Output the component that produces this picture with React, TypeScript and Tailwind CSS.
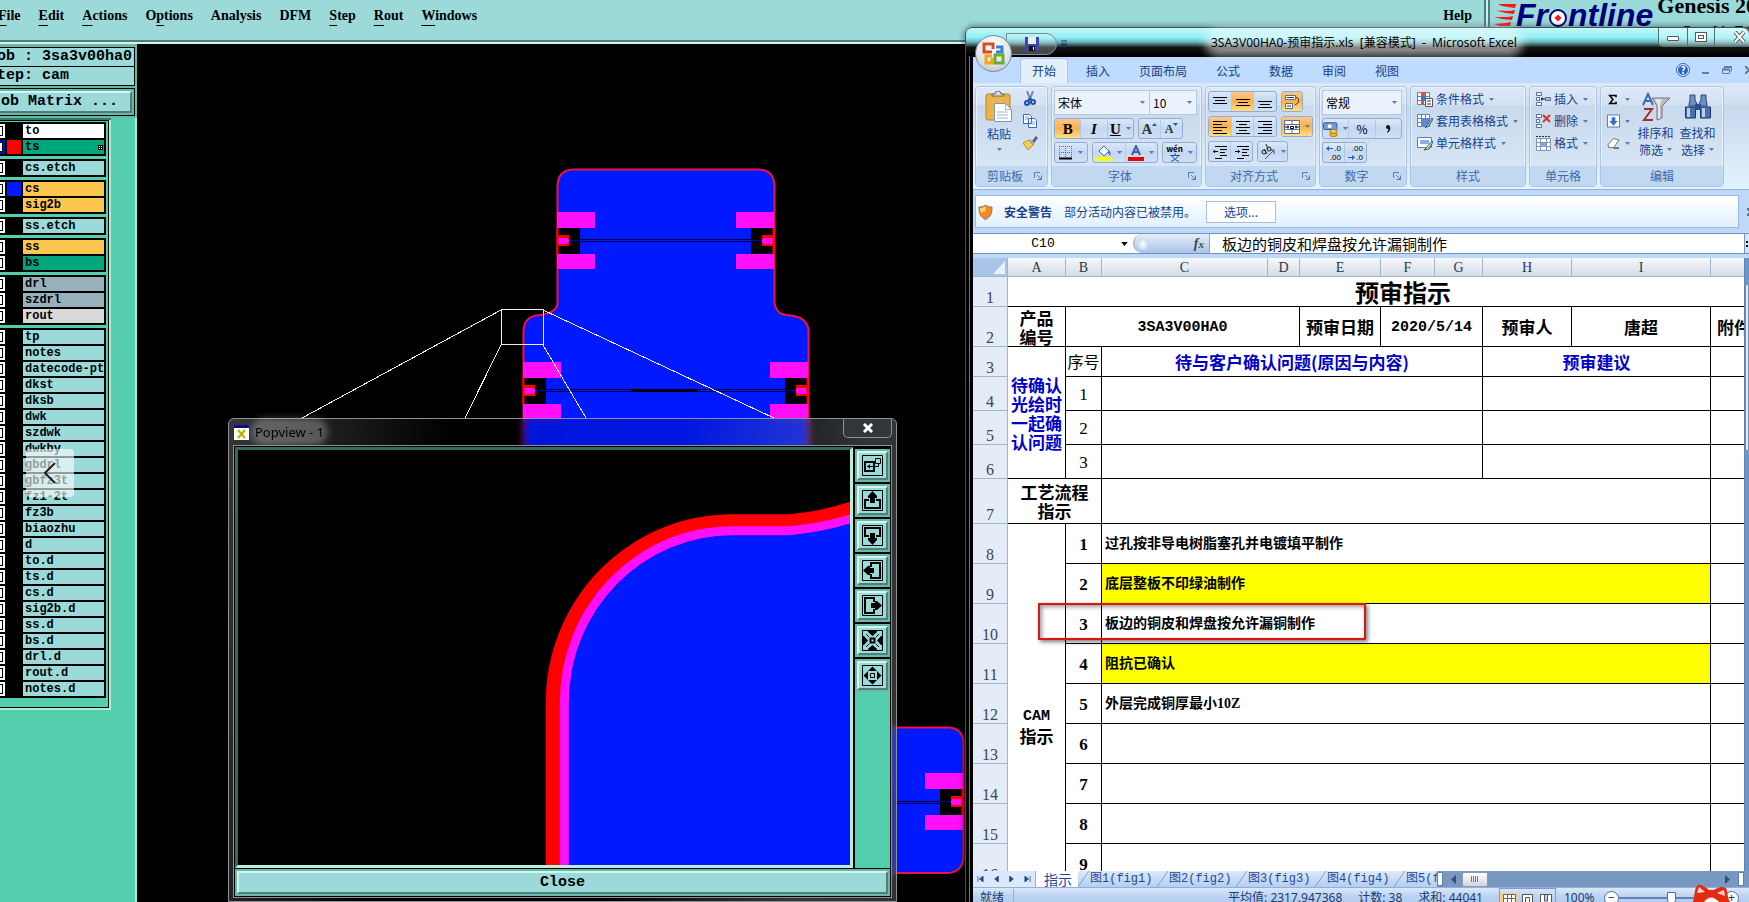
import type { ReactNode } from 'react';
import clsx from 'clsx';

type Layer = { name: string; tone: string; swatch?: string; active?: boolean };

const AQUA = 'bg-[#9cdada]';
const AMBER = 'bg-[#fdc64f]';
const GREEN = 'bg-[#00a67c]';
const STEEL = 'bg-[#98b2bd]';

const layerGroups: Layer[][] = [
  [{ name: 'to', tone: 'bg-white' }, { name: 'ts', tone: GREEN, swatch: 'bg-[#ff0000]', active: true }],
  [{ name: 'cs.etch', tone: AQUA }],
  [{ name: 'cs', tone: AMBER, swatch: 'bg-[#0019ff]' }, { name: 'sig2b', tone: AMBER }],
  [{ name: 'ss.etch', tone: AQUA }],
  [{ name: 'ss', tone: AMBER }, { name: 'bs', tone: GREEN }],
  [{ name: 'drl', tone: STEEL }, { name: 'szdrl', tone: STEEL }, { name: 'rout', tone: 'bg-[#d9d9d9]' }],
  ['tp', 'notes', 'datecode-pto', 'dkst', 'dksb', 'dwk', 'szdwk', 'dwkby', 'gbdrl', 'gbfz3t', 'fz1-2t', 'fz3b', 'biaozhu',
    'd', 'to.d', 'ts.d', 'cs.d', 'sig2b.d', 'ss.d', 'bs.d', 'drl.d', 'rout.d', 'notes.d'].map(name => ({ name, tone: AQUA })),
];

// [text before the mnemonic, mnemonic, rest]
const menus = [
  ['', 'F', 'ile'], ['', 'E', 'dit'], ['', 'A', 'ctions'], ['O', 'p', 'tions'], ['Analysis', '', ''],
  ['DFM', '', ''], ['', 'S', 'tep'], ['', 'R', 'out'], ['', 'W', 'indows'],
];

function MenuBar() {
  return (
    <header className="flex h-11 shrink-0 items-start overflow-hidden border-b-2 border-[#d8f2f0] bg-[#9cdada] font-['Liberation_Serif',serif] text-sm font-bold text-black shadow-[inset_0_-2px_0_#4f7f7c]">
      <nav className="-ml-[2px] flex gap-[18px] pt-[6px]">
        {menus.map(([a, b, c]) => (
          <button key={a + b + c} className="leading-[20px]">{a}<span className="underline underline-offset-[5px]">{b}</span>{c}</button>
        ))}
      </nav>
      <button className="ml-auto pt-[6px] leading-[20px]">Help</button>
      <div className="ml-3 h-full w-[6px] border-x-2 border-[#4f7f7c] bg-[#c9efee]" />
      <div className="flex w-[259px] items-start pl-1">
        <svg className="mt-1 h-[24px] w-[22px] shrink-0" viewBox="0 0 22 24">
          <g fill="#f01818">
            <path d="M4 0H22L21 4L8 2ZM2 6.500 16 7 21 6 20 10 12 9ZM0 13 14 13 19 12 18 16 8 15ZM0 20 12 19 17 18 16 22 6 22Z" />
          </g>
        </svg>
        <span className="flex items-center font-['Liberation_Sans',sans-serif] text-[32px] font-bold italic leading-[31px] text-[#00007c]">
          Fr
          <svg className="mt-1 h-[20px] w-[20px]" viewBox="0 0 20 20" aria-label="o">
            <circle cx="10" cy="10" r="8" fill="#fff" stroke="#00007c" strokeWidth="2" />
            <path d="M10 6.500L13.500 10L10 13.500L6.500 10Z" fill="#f01818" />
          </svg>
          ntline
        </span>
        <div className="ml-1 shrink-0 whitespace-nowrap">
          <div className="-mt-[6px] text-[22px] leading-[24px]">Genesis 2000</div>
          <div className="mt-[6px] pl-6 text-sm leading-[16px]">Graphic Editor</div>
        </div>
      </div>
    </header>
  );
}

function LayerRow({ layer }: { layer: Layer }) {
  return (
    <label className="flex h-[14px] items-center">
      <input type="checkbox" aria-label={layer.name} className={clsx('h-[14px] w-[14px] appearance-none border-2 bg-white outline outline-1 -outline-offset-[3px] outline-black', layer.active ? 'border-[#0010c0]' : 'border-white')} />
      <span className={clsx('ml-[2px] h-[14px] w-[14px]', layer.swatch ?? 'bg-black')} />
      <span className={clsx('ml-[2px] flex h-[14px] w-[81px] items-center overflow-hidden whitespace-nowrap pl-[2px] leading-[14px]', layer.tone)}>
        {layer.name}
        {layer.active && (
          <svg className="ml-auto mr-[1px] h-[5px] w-[5px]" viewBox="0 0 5 5"><path d="M0 0H5V5H0Z" fill="#000" /><path d="M1 1h1v1H1ZM3 1h1v1H3ZM1 3h1v1H1ZM3 3h1v1H3Z" fill="#fff" /></svg>
        )}
      </span>
    </label>
  );
}

function Sidebar() {
  return (
    <aside className="flex w-[137px] shrink-0 flex-col overflow-hidden bg-[#55ceae] font-['Liberation_Mono',monospace] font-bold text-black">
      <div className="bg-[#68b8a6] pb-[2px] pt-[3px] text-[15px]">
        <div className="mr-[2px] whitespace-pre border-y border-r border-black bg-[#9cdada] leading-[18px]"><span className="-ml-3">Job : 3sa3v00ha0</span></div>
        <div className="mr-[2px] whitespace-pre border-b border-r border-black bg-[#9cdada] leading-[18px]"><span className="-ml-3">Step: cam</span></div>
        <div className="mr-[2px] mt-[2px] border-y border-r border-black py-[2px] pr-[2px]">
          <button className="flex h-[22px] w-full items-center whitespace-pre border-b-2 border-r-2 border-t-2 border-b-[#4f7f7c] border-r-[#4f7f7c] border-t-[#d0f6f2] bg-[#9cdada]"><span className="-ml-2">Job Matrix ...</span></button>
        </div>
      </div>
      <div className="flex flex-1 border-r-2 border-[#a8ecd9]">
        <div className="flex w-[111px] flex-col border-t-2 border-[#2f7c68]">
          <div className="flex flex-col border-b-2 border-r-2 border-[#a8ecd9] text-[12px]">
            <div className="flex flex-col gap-[3px] border-b border-r border-t border-black pb-[9px] pt-[1px]">
              {layerGroups.map((group, i) => (
                <div key={i} className="-ml-[9px] flex w-[115px] flex-col gap-[2px] bg-black py-[2px]">
                  {group.map(layer => <LayerRow key={layer.name} layer={layer} />)}
                </div>
              ))}
            </div>
          </div>
        </div>
      </div>
    </aside>
  );
}

function Pads({ x, y, flip }: { x: number; y: number; flip?: boolean }) {
  return (
    <g transform={flip ? `translate(${x} ${y}) scale(-1 1)` : `translate(${x} ${y})`}>
      <rect x="1" y="16" width="22" height="26" fill="#000" />
      <rect width="38" height="16" fill="#ff10f8" />
      <rect y="42" width="38" height="15" fill="#ff10f8" />
      <rect width="12" height="11" y="23" fill="#f00" />
      <path d="M0 26H10L12 28V30L10 32H0Z" fill="#ff10f8" />
      <path d="M.5 16V42" stroke="#f00" strokeWidth="2" />
      <path d="M12 28.500H23" stroke="#0000a8" />
    </g>
  );
}

function BoardCanvas() {
  return (
    <svg className="h-full min-w-0 flex-1 bg-black" viewBox="137 44 1612 858" preserveAspectRatio="xMinYMin slice">
      <path d="M523.500 620V331Q524 316 540 315Q557 313 557.500 303V186Q558 170 573 169.500H759Q774 170 774.500 186V303Q776 314 786 315Q808 316 808.500 331V620Z" fill="#0019ff" stroke="#f0104a" strokeWidth="2" />
      <path d="M580 239.500H751M580 241.500H751M546 389.500H785M546 391.500H785" stroke="#000040" />
      <path d="M631 390.500H698" stroke="#000" strokeWidth="3" />
      <Pads x={557} y={212} />
      <Pads x={774} y={212} flip />
      <Pads x={523} y={362} />
      <Pads x={808} y={362} flip />
      <path d="M700 727.500H948Q963 728 963.500 743V858Q962 872 948 873H700Z" fill="#0019ff" stroke="#f0104a" strokeWidth="2" />
      <path d="M890 801.500H941M890 803.500H941" stroke="#000040" />
      <Pads x={963} y={773} flip />
      <path d="M501.500 309.500H543.500V344.500H501.500ZM501 310L302 418M501 345L465 418M543 345L586 418M543 310L774 418" fill="none" stroke="#eeeedd" shapeRendering="crispEdges" />
    </svg>
  );
}

const popTools: { label: string; icon: ReactNode }[] = [
  { label: 'Zoom to view', icon: <><path d="M3 7h9v9H3Z" fill="none" stroke="#000" strokeWidth="2" /><path d="M13.500 3.500h5v5h-5ZM12 11.500h4.500v-3M5 11.500h6M7.500 9.500v4M6.500 10.500v2" fill="none" stroke="#000" /></> },
  { label: 'Pan up', icon: <><path d="M7 10H3v8h15V10H14" fill="none" stroke="#000" strokeWidth="2" /><path d="M10.500 1L15 6V8H13V13H8V8H6V6Z" /></> },
  { label: 'Pan down', icon: <><path d="M7 11H3V3h15V11H14" fill="none" stroke="#000" strokeWidth="2" /><path d="M10.500 20L15 15V13H13V8H8V13H6V15Z" /></> },
  { label: 'Pan left', icon: <><path d="M9 7V3h9v15H9V14" fill="none" stroke="#000" strokeWidth="2" /><path d="M1 10.500L6 6H8V8H12V13H8V15H6Z" /></> },
  { label: 'Pan right', icon: <><path d="M12 7V3H3v15H12V14" fill="none" stroke="#000" strokeWidth="2" /><path d="M20 10.500L15 6H13V8H9V13H13V15H15Z" /></> },
  { label: 'Zoom in', icon: <><path d="M8.500 8.500h4v4h-4Z" fill="none" stroke="#000" strokeWidth="2" /><path d="M6 1h9v1L10.500 6L6 2ZM6 20h9v-1L10.500 15L6 19ZM1 6v9h1L6 10.500L2 6ZM20 6v9h-1L15 10.500L19 6Z" /><path d="M4 4l3 3M17 4l-3 3M4 17l3-3M17 17l-3-3" stroke="#000" /></> },
  { label: 'Zoom out', icon: <><path d="M8.500 8.500h4v4h-4Z" fill="none" stroke="#000" /><path d="M6 6h9L10.500 1.500ZM6 15h9L10.500 19.500ZM6 6v9L1.500 10.500ZM15 6v9L19.500 10.500Z" /></> },
];

function Popview() {
  return (
    <section className="absolute bottom-0 left-[228px] top-[418px] flex w-[669px] flex-col rounded-t-[6px] border border-[#8d9195] bg-[linear-gradient(100deg,rgba(90,92,95,.6),rgba(0,0,0,.15)_30%,rgba(0,0,0,.12)_60%,rgba(120,130,140,.4)_85%,rgba(80,82,85,.6))] px-1 pb-[3px] backdrop-blur-[3px]">
      <div className="flex h-[26px] shrink-0 items-start">
        <svg className="ml-[1px] mt-[6px] h-[15px] w-[15px]" viewBox="0 0 15 15">
          <path d="M0 0h15v15H0Z" fill="#fff" /><path d="M0 0h15v3H0Z" fill="#10107c" />
          <path d="M4 5l7 8M11 5l-7 8" stroke="#b8b000" strokeWidth="2" />
        </svg>
        <h2 className="ml-[6px] mt-[3px] rounded-full bg-white/25 font-['Noto_Sans',sans-serif] text-[13px] leading-[20px] text-black shadow-[0_0_6px_4px_rgba(255,255,255,.25)]">Popview - 1</h2>
        <button aria-label="Close window" className="ml-auto flex h-[19px] w-[49px] items-center justify-center rounded-b-[5px] border border-t-0 border-[#8d9195] bg-[#33363a]">
          <svg className="h-[10px] w-[12px]" viewBox="0 0 12 10"><path d="M2 1l8 8M10 1l-8 8" stroke="#fff" strokeWidth="3" /></svg>
        </button>
      </div>
      <div className="flex min-h-0 flex-1 flex-col border border-[#8d9195] bg-black p-[1px]">
        <div className="flex min-h-0 flex-1">
          <div className="min-w-0 flex-1 border-[3px] border-b-[#b8efdc] border-l-[#356b5c] border-r-[#b8efdc] border-t-[#356b5c]">
            <svg className="h-full w-full" viewBox="238 450 612 414" preserveAspectRatio="xMinYMin slice">
              <path d="M545 870V702A186 188 0 0 1 731 514H788Q822 511 853 500V870Z" fill="#f00" />
              <path d="M559 870V702A172 176 0 0 1 731 526H788Q822 523 853 513V870Z" fill="#ff10f8" />
              <path d="M568 870V702A163 167 0 0 1 731 535H788Q822 532 853 522V870Z" fill="#0019ff" />
            </svg>
          </div>
          <div className="ml-[2px] flex w-[35px] flex-col bg-[#55ceae]">
            {popTools.map(tool => (
              <div key={tool.label} className="border-t-2 border-black bg-[#68b8a6] p-[2px]">
                <button aria-label={tool.label} className="flex h-[29px] w-full items-center justify-center border-2 border-b-[#4f7f7c] border-l-[#d0f6f2] border-r-[#4f7f7c] border-t-[#d0f6f2] bg-[#9cdada]">
                  <svg className="h-[21px] w-[21px]" viewBox="0 0 21 21"><path d="M.5.5h20v20H.5Z" fill="none" stroke="#000" />{tool.icon}</svg>
                </button>
              </div>
            ))}
          </div>
        </div>
        <div className="mt-[1px] bg-[#68b8a6] p-[2px]">
          <button className="flex h-[23px] w-full items-center justify-center border-2 border-b-[#4f7f7c] border-l-[#d0f6f2] border-r-[#4f7f7c] border-t-[#d0f6f2] bg-[#9cdada] font-['Liberation_Mono',monospace] text-[15px] font-bold leading-[18px] text-black">Close</button>
        </div>
      </div>
    </section>
  );
}

function Caret() {
  return <svg className="h-[3px] w-[5px] shrink-0" viewBox="0 0 5 3"><path d="M0 0H5L2.500 3Z" fill="#5a7cb0" /></svg>;
}

function Cluster({ children, className }: { children: ReactNode; className?: string }) {
  return <div className={clsx('flex h-[21px] divide-x divide-[#b4cbe8] overflow-hidden rounded-[3px] border border-[#92add2] bg-[linear-gradient(#dbe8f8,#c3d8f2_50%,#cfe0f5)]', className)}>{children}</div>;
}

function Tool({ label, children, on, caret }: { label: string; children: ReactNode; on?: boolean; caret?: boolean }) {
  return (
    <button aria-label={label} className={clsx('flex min-w-0 flex-1 items-center justify-center gap-[5px]', on && 'bg-[linear-gradient(#fbc98a,#fdb04c_50%,#ffe08a)]')}>
      {children}
      {caret && <Caret />}
    </button>
  );
}

function Lines({ d }: { d: string }) {
  return <svg className="h-4 w-4" viewBox="0 0 16 16"><path d={d} stroke="#000" shapeRendering="crispEdges" /></svg>;
}

function Combo({ value, label, className }: { value: string; label: string; className: string }) {
  return (
    <div className={clsx('relative flex h-[25px] items-center border border-[#b3c9e6] bg-[#eaf2fb]', className)}>
      <select aria-label={label} className="h-full w-full appearance-none bg-transparent pl-[3px] text-[12px] leading-[20px] text-black outline-none"><option>{value}</option></select>
      <span className="pointer-events-none absolute right-1 top-[10px]"><Caret /></span>
    </div>
  );
}

function RibbonGroup({ title, className, launcher, children }: { title: string; className: string; launcher?: boolean; children: ReactNode }) {
  return (
    <div className={clsx('flex h-[101px] shrink-0 flex-col overflow-hidden rounded-[4px] border border-[#a9c4e4] bg-[linear-gradient(#dde9f7,#d3e1f3_18%,#c8d9ed_19%,#dceaf8)] shadow-[inset_0_0_0_1px_rgba(255,255,255,.5)]', className)}>
      <div className="min-h-0 flex-1">{children}</div>
      <div className="flex h-5 items-center justify-center bg-[#c1d8f0] text-[12px] leading-[20px] text-[#3e6aaa]">
        <span className="flex-1 text-center">{title}</span>
        {launcher && <svg className="mr-[5px] h-[8px] w-[8px]" viewBox="0 0 8 8"><path d="M.5 6V.5H6M3 3l4 4M7.500 3.500v4h-4" fill="none" stroke="#5b7bab" /></svg>}
      </div>
    </div>
  );
}

function IconRow({ text, icon }: { text: string; icon: ReactNode }) {
  return <button className="flex h-[22px] items-center gap-[3px] text-[12px] text-[#15428b]"><svg className="h-4 w-4" viewBox="0 0 16 16">{icon}</svg>{text}<span className="ml-[2px]"><Caret /></span></button>;
}

const gridIcon = <><path d="M.5 1.500h12v12H.5ZM.5 5.500h12M.5 9.500h12M4.500 1.500v12M8.500 1.500v12" fill="#fff" stroke="#5f7fb5" /></>;
const cellRows = <path d="M1.500 1.500h5v3h-5ZM1.500 6.500h3v3h-3ZM1.500 11.500h5v3h-5Z" fill="#fff" stroke="#54709c" />;

function Ribbon() {
  return (
    <div className="flex h-[107px] shrink-0 gap-[3px] overflow-hidden border-b border-[#8db2e3] bg-[linear-gradient(#dde9f7,#d0dff2_20%,#c7d8ed_21%,#e3f4ff)] px-[2px] pt-[3px]">
      <RibbonGroup title="剪贴板" className="w-[73px]" launcher>
        <div className="flex px-[9px] pt-1">
          <button className="flex w-[30px] flex-col items-center text-[12px] leading-[20px] text-[#15428b]">
            <svg className="h-[32px] w-[28px]" viewBox="0 0 28 32">
              <rect x="1" y="3" width="24" height="26" rx="2" fill="#e9b44c" stroke="#b9832a" />
              <path d="M7 5h12V3H16a3 3 0 0 0-6 0H7Z" fill="#ddd" stroke="#666" />
              <path d="M9.500 12.500h11l6 6v12h-17Z" fill="#fff" stroke="#8296b8" /><path d="M20.500 12.500v6h6M12 21h11M12 24h11M12 27h11" fill="none" stroke="#9fb2cf" />
            </svg>
            <span className="mt-[1px] whitespace-nowrap">粘贴</span>
            <span className="mt-1"><Caret /></span>
          </button>
          <div className="ml-[9px] flex flex-col gap-[6px]">
            <button aria-label="剪切"><svg className="block h-4 w-4" viewBox="0 0 16 16"><path d="M5 0l3 8M11 0L8 8" stroke="#6d86ab" strokeWidth="2" /><path d="M8 7l-2 3M8 7l2 3" stroke="#1f4fa8" strokeWidth="2" /><circle cx="5" cy="12" r="2" fill="none" stroke="#1f4fa8" strokeWidth="2" /><circle cx="11" cy="11" r="2" fill="none" stroke="#1f4fa8" strokeWidth="2" /></svg></button>
            <button aria-label="复制"><svg className="block h-4 w-4" viewBox="0 0 16 16"><path d="M1.500 1.500h6l2 2v7h-8ZM6.500 5.500h6l2 2v7h-8Z" fill="#fff" stroke="#3b69b4" /><path d="M3 4h4M3 6h3M8 9h5M8 11h5" stroke="#7da0d8" /></svg></button>
            <button aria-label="格式刷"><svg className="block h-4 w-4" viewBox="0 0 16 16"><path d="M10 6l4-5 2 2-4 5Z" fill="#555a88" /><path d="M8 4l5 5-2 1-4-5Z" fill="#aaa" /><path d="M1 8l6-3 4 5-5 5Z" fill="#f4cf5c" stroke="#b88f24" /></svg></button>
          </div>
        </div>
      </RibbonGroup>

      <RibbonGroup title="字体" className="w-[151px]" launcher>
        <div className="flex flex-col gap-[3px] px-[2px] pt-[3px]">
          <div className="flex"><Combo value="宋体" label="字体名称" className="w-[96px]" /><Combo value="10" label="字号" className="w-[47px] border-l-0" /></div>
          <div className="flex gap-1 font-['Liberation_Serif',serif] text-[15px] font-bold leading-[18px] text-black">
            <Cluster className="w-[80px]"><Tool label="加粗" on>B</Tool><Tool label="倾斜"><i>I</i></Tool><Tool label="下划线" caret><u>U</u></Tool></Cluster>
            <Cluster className="w-[45px] text-[#333]">
              <Tool label="增大字号"><span className="flex">A<svg className="mt-[3px] h-[3px] w-[5px]" viewBox="0 0 5 3"><path d="M0 3H5L2.500 0Z" fill="#2d57a0" /></svg></span></Tool>
              <Tool label="减小字号"><span className="flex text-[12px]">A<svg className="mt-[3px] h-[3px] w-[5px]" viewBox="0 0 5 3"><path d="M0 0H5L2.500 3Z" fill="#2d57a0" /></svg></span></Tool>
            </Cluster>
          </div>
          <div className="flex gap-1">
            <Cluster className="w-[34px]"><Tool label="边框" caret><svg className="h-[14px] w-[14px]" viewBox="0 0 14 14"><path d="M.5 0v13M6.500 0v13M12.500 0v13M0 .5h13M0 6.500h13" stroke="#667" strokeDasharray="1 1" /><path d="M0 12.500h13" stroke="#000" strokeWidth="2" /></svg></Tool></Cluster>
            <Cluster className="w-[66px]">
              <Tool label="填充颜色" caret><svg className="h-4 w-4" viewBox="0 0 16 16"><path d="M3 6l5-5 5 5-5 5Z" fill="#fff" stroke="#445d88" /><path d="M12 5c3 1 3 4 2 6l-2-3Z" fill="#4e7cc0" /><path d="M0 12h16v4H0Z" fill="#ff0" /></svg></Tool>
              <Tool label="字体颜色" caret><svg className="h-4 w-4" viewBox="0 0 16 16"><path d="M4 10L8 1l4 9M5.500 7h5" fill="none" stroke="#3a5ea8" strokeWidth="2" /><path d="M0 12h16v4H0Z" fill="#f00000" /></svg></Tool>
            </Cluster>
            <Cluster className="w-[35px]">
              <Tool label="拼音指南" caret>
                <span className="flex flex-col items-center font-bold text-black">
                  <span className="text-[8px] leading-[9px]">wén</span>
                  <svg className="h-[9px] w-[12px]" viewBox="0 0 12 9"><path d="M6 0v2M1 2.500h10M3 3q2 4 7 5.500M9 3q-2 4-7 5.500" fill="none" stroke="#1f4fa8" /></svg>
                </span>
              </Tool>
            </Cluster>
          </div>
        </div>
      </RibbonGroup>

      <RibbonGroup title="对齐方式" className="w-[111px]" launcher>
        <div className="flex flex-col gap-[4px] px-[2px] pt-1">
          <div className="flex gap-1">
            <Cluster className="w-[69px]">
              <Tool label="顶端对齐"><Lines d="M1 3.500h14M3 6.500h10M1 9.500h14" /></Tool>
              <Tool label="垂直居中" on><Lines d="M1 5.500h14M3 8.500h10M1 11.500h14" /></Tool>
              <Tool label="底端对齐"><Lines d="M1 7.500h14M3 10.500h10M1 13.500h14" /></Tool>
            </Cluster>
            <Cluster className="w-[22px]"><Tool label="自动换行" on><svg className="h-4 w-4" viewBox="0 0 16 16"><path d="M1.500 1.500h10v4h-10ZM1.500 9.500h7v5h-7Z" fill="#fff" stroke="#54709c" /><path d="M3 3.500h7M3 12h4M12 3.500c4 0 3 7-1 7" fill="none" stroke="#333" /></svg></Tool></Cluster>
          </div>
          <div className="flex gap-1">
            <Cluster className="w-[69px]">
              <Tool label="左对齐" on><Lines d="M1 2.500h14M1 5.500h9M1 8.500h14M1 11.500h9M1 14.500h14" /></Tool>
              <Tool label="居中"><Lines d="M1 2.500h14M4 5.500h8M1 8.500h14M4 11.500h8M1 14.500h14" /></Tool>
              <Tool label="右对齐"><Lines d="M1 2.500h14M6 5.500h9M1 8.500h14M6 11.500h9M1 14.500h14" /></Tool>
            </Cluster>
            <Cluster className="w-[32px]"><Tool label="合并后居中" on caret><svg className="h-4 w-4" viewBox="0 0 16 16"><path d="M.5 1.500h15v13H.5ZM.5 5.500h15M.5 10.500h15M8 1v4M8 11v4" fill="#fff" stroke="#54709c" /><path d="M1 8h4M11 8h4M4 6.500v3M12 6.500v3M6.500 7.500h3v2h-3Z" fill="none" stroke="#000" /></svg></Tool></Cluster>
          </div>
          <div className="flex gap-1">
            <Cluster className="w-[45px]">
              <Tool label="减少缩进量"><Lines d="M3 2.500h12M8 5.500h7M8 8.500h5M8 11.500h7M3 14.500h7M1 7.500h5M2 6.500h1M2 8.500h1" /></Tool>
              <Tool label="增加缩进量"><Lines d="M3 2.500h12M8 5.500h7M8 8.500h5M8 11.500h7M3 14.500h7M1 7.500h5M4 6.500h1M4 8.500h1" /></Tool>
            </Cluster>
            <Cluster className="w-[31px]"><Tool label="方向" caret><svg className="h-4 w-4" viewBox="0 0 16 16"><path d="M5 15L14 6M14 6v4M14 6h-4" stroke="#555" fill="none" /><circle cx="4" cy="8" r="2" fill="none" stroke="#222" /><circle cx="9" cy="5" r="2" fill="none" stroke="#222" /><path d="M4 5l3 5M6 0l2 5" stroke="#222" /></svg></Tool></Cluster>
          </div>
        </div>
      </RibbonGroup>

      <RibbonGroup title="数字" className="w-[88px]" launcher>
        <div className="flex flex-col gap-[3px] px-[2px] pt-[3px]">
          <Combo value="常规" label="数字格式" className="w-[80px]" />
          <Cluster className="w-[80px] text-[12px] text-black">
            <Tool label="会计数字格式" caret><svg className="h-4 w-4" viewBox="0 0 16 16"><rect x=".5" y="1.500" width="14" height="7" rx="1" fill="#7a9bd0" stroke="#2d57a0" /><circle cx="7" cy="5" r="2" fill="#fff" /><ellipse cx="11" cy="14" rx="4" ry="2" fill="#e8b830" stroke="#a87b10" /><ellipse cx="11" cy="10.500" rx="4" ry="2" fill="#f5cf58" stroke="#a87b10" /></svg></Tool>
            <Tool label="百分比样式">%</Tool>
            <Tool label="千位分隔样式"><svg className="h-[8px] w-[5px]" viewBox="0 0 5 8"><path d="M0 2a2 2 0 1 1 4 0c1 3-1 5-3 6l0-1c1-1 2-2 1-3a2 2 0 0 1-2-2Z" fill="#111" /></svg></Tool>
          </Cluster>
          <Cluster className="w-[45px] font-['Liberation_Sans',sans-serif] text-[8px] leading-[9px] text-black">
            <Tool label="增加小数位数"><span className="flex flex-col items-end"><span className="flex items-center gap-[1px]"><svg className="h-[5px] w-[7px]" viewBox="0 0 7 5"><path d="M0 2.500L3 0V2H7V3H3V5Z" fill="#1f5fc8" /></svg>.0</span><span>.00</span></span></Tool>
            <Tool label="减少小数位数"><span className="flex flex-col items-end"><span>.00</span><span className="flex items-center gap-[1px]"><svg className="h-[5px] w-[7px]" viewBox="0 0 7 5"><path d="M7 2.500L4 0V2H0V3H4V5Z" fill="#1f5fc8" /></svg>.0</span></span></Tool>
          </Cluster>
        </div>
      </RibbonGroup>

      <RibbonGroup title="样式" className="w-[116px]">
        <div className="flex flex-col pl-[6px] pt-[1px]">
          <IconRow text="条件格式" icon={<>{gridIcon}<path d="M4 1h4v4H4ZM4 9h3v4H4Z" fill="#e0523c" /><path d="M4 5h5v4H4Z" fill="#4a74c4" /><path d="M8.500 7.500h7v8h-7Z" fill="#fff" stroke="#556" /><path d="M10 10h4M10 13h4" stroke="#333" /></>} />
          <IconRow text="套用表格格式" icon={<>{gridIcon}<path d="M4 5h9v9H4Z" fill="#5d8ad4" /><path d="M8 15l3-4 4-6 1 1-4 7Z" fill="#f0d078" stroke="#3058a0" /></>} />
          <IconRow text="单元格样式" icon={<><path d="M.5 2.500h14v10H.5Z" fill="#fff" stroke="#5f7fb5" /><path d="M3 5h9v4H3Z" fill="#85b0ea" /><path d="M7 15l3-3 5-6 1 1-4 7Z" fill="#f0d078" stroke="#3058a0" /></>} />
        </div>
      </RibbonGroup>

      <RibbonGroup title="单元格" className="w-[68px]">
        <div className="flex flex-col pl-[5px] pt-[1px]">
          <IconRow text="插入" icon={<>{cellRows}<path d="M6 8h4M7 6.500v3" stroke="#000" /><path d="M10.500 6.500h5v3h-5Z" fill="#9fc0ee" stroke="#54709c" /></>} />
          <IconRow text="删除" icon={<>{cellRows}<path d="M8 2l7 7M15 2L8 9" stroke="#e03020" strokeWidth="2" /></>} />
          <IconRow text="格式" icon={<><path d="M1.500 3.500h14v12h-14ZM1.500 7.500h14M1.500 11.500h14M5.500 3.500v12M11.500 3.500v12" fill="#fff" stroke="#7f94b8" /><path d="M6 8h5v4H6Z" fill="#7fa8e8" /><path d="M1 1.500h15" stroke="#333" strokeDasharray="2 1" /></>} />
        </div>
      </RibbonGroup>

      <RibbonGroup title="编辑" className="w-[124px]">
        <div className="flex pl-[6px] pt-[1px] text-[12px] leading-[17px] text-[#15428b]">
          <div className="flex w-6 flex-col">
            <button aria-label="求和" className="flex h-[22px] items-center gap-[7px]"><svg className="h-[11px] w-[11px]" viewBox="0 0 13 14"><path d="M11 4V2H3l4 5-4 5h8v-2" fill="none" stroke="#000" strokeWidth="2" /></svg><Caret /></button>
            <button aria-label="填充" className="flex h-[22px] items-center gap-[5px]"><svg className="h-[14px] w-[13px]" viewBox="0 0 14 14"><path d="M.5.5h13v13H.5Z" fill="#fff" stroke="#4870b0" /><path d="M5 3h4v4h2.500L7 12 2.500 7H5Z" fill="#2e6fd8" /></svg><Caret /></button>
            <button aria-label="清除" className="flex h-[22px] items-center gap-[5px]"><svg className="h-[14px] w-[13px]" viewBox="0 0 14 14"><path d="M1 9l6-7 6 2-6 8H2Z" fill="#fff" stroke="#666" /><path d="M7 12.500h6" stroke="#000" /></svg><Caret /></button>
          </div>
          <button className="ml-[6px] flex w-[37px] flex-col items-center whitespace-nowrap pt-1">
            <svg className="h-[32px] w-[32px]" viewBox="0 0 32 32">
              <path d="M3 13L8 2l5 11M5 9h6" fill="none" stroke="#3a68b8" strokeWidth="2" /><path d="M4 17h8L4 28h9" fill="none" stroke="#a03030" strokeWidth="2" />
              <path d="M12 6h18l-8 8v12l-5 2V14Z" fill="#b9bcc0" stroke="#77797d" /><path d="M15 7h7l-2 7v12l-2 1V14Z" fill="#e4e6e8" />
            </svg>
            <span>排序和</span><span className="flex items-center gap-1">筛选 <Caret /></span>
          </button>
          <button className="ml-[5px] flex w-[37px] flex-col items-center whitespace-nowrap pt-1">
            <svg className="h-[32px] w-[32px]" viewBox="0 0 32 32">
              <path d="M8 3h5v5l2 4v2h-8v-2l1-4ZM19 3h5v5l1 4v2h-8v-2l2-4Z" fill="#6f8fc4" stroke="#2d4878" /><path d="M3.500 15h10v11h-10ZM18.500 15h10v11h-10Z" fill="#4d6fa8" stroke="#1d3868" />
              <path d="M13 12h6v6h-6Z" fill="#2e4f88" /><path d="M5 16h3v9H5ZM20 16h3v9h-3Z" fill="#b9cdee" />
            </svg>
            <span>查找和</span><span className="flex items-center gap-1">选择 <Caret /></span>
          </button>
        </div>
      </RibbonGroup>
    </div>
  );
}

function TitleBar() {
  return (
    <div className="relative flex h-[28px] shrink-0 items-start rounded-t-[6px] bg-[linear-gradient(#c2f8fc,#8eeef4_35%,#69b4ba_50%,#111_70%,#000)]">
      <div className="ml-[40px] mt-[5px] flex h-[22px] w-[51px] items-center justify-center rounded-r-full border border-[#7f8f94] bg-white/25">
        <button aria-label="保存"><svg className="block h-[14px] w-[14px]" viewBox="0 0 14 14"><path d="M0 0h14v14H1L0 13Z" fill="#3b46a8" /><path d="M3 0h8v7H3Z" fill="#e8eefc" /><path d="M4 9h6v5H4Z" fill="#111" /><path d="M8 10h1v3H8Z" fill="#fff" /></svg></button>
      </div>
      <button aria-label="自定义快速访问工具栏" className="ml-1 mt-[12px]"><svg className="h-[8px] w-[6px]" viewBox="0 0 6 8"><path d="M0 1h6M0 4h6L3 7Z" stroke="#1b3a66" fill="#1b3a66" /></svg></button>
      <h1 className="flex-1 pl-[144px] pt-[6px] font-['Noto_Sans','Noto_Sans_CJK_SC',sans-serif] text-[12px] leading-[18px] text-black">
        <span className="whitespace-pre rounded-full bg-white/50 shadow-[0_0_8px_6px_rgba(255,255,255,.5)]">3SA3V00HA0-预审指示.xls  [兼容模式]  -  Microsoft Excel</span>
      </h1>
      <div className="flex h-[19px] w-[91px] shrink-0 overflow-hidden rounded-bl-[5px] border-b border-l border-[#4c7276] bg-white/30">
        <button aria-label="最小化" className="flex w-[29px] shrink-0 items-end justify-center border-r border-[#4c7276] pb-[5px]"><span className="h-[5px] w-[12px] rounded-[1px] border border-[#555] bg-white" /></button>
        <button aria-label="还原" className="flex w-[27px] shrink-0 items-center justify-center border-r border-[#4c7276]"><span className="flex h-[10px] w-[12px] items-center justify-center border border-[#555] bg-white"><span className="h-[4px] w-[6px] border border-[#555]" /></span></button>
        <button aria-label="关闭" className="flex w-[48px] shrink-0 items-center justify-center"><svg className="h-[12px] w-[13px]" viewBox="0 0 13 12"><path d="M2 1l9 10M11 1L2 11" stroke="#555" strokeWidth="4" /><path d="M2 1l9 10M11 1L2 11" stroke="#fff" strokeWidth="2" /></svg></button>
      </div>
      <button aria-label="Office 按钮" className="absolute left-[9px] top-[7px] z-10 flex h-[37px] w-[37px] items-center justify-center rounded-full border border-[#7d8894] bg-[radial-gradient(circle_at_50%_30%,#fff,#dfe3ea_60%,#a9b3c2)]">
        <svg className="h-[23px] w-[23px]" viewBox="0 0 23 23">
          <g fill="none" strokeWidth="3"><path d="M10 10H2V2h9v5" stroke="#dc4a1c" /><path d="M14 10h6V5h-6" stroke="#3b7fd0" /><path d="M10 14H4v7h6v-5" stroke="#f0a818" /><path d="M13 13h8v8h-8Z" stroke="#6aac34" /></g>
        </svg>
      </button>
    </div>
  );
}

const ribbonTabs = ['开始', '插入', '页面布局', '公式', '数据', '审阅', '视图'];

function RibbonTabs() {
  return (
    <div className="flex h-[27px] shrink-0 items-end overflow-hidden border-t border-black bg-[#bfdbff] pl-[47px] text-[12px] text-[#15428b]">
      {ribbonTabs.map((tab, i) => (
        <button key={tab} className={clsx('mr-[7px] h-[25px] shrink-0 rounded-t-[3px] px-[11px] leading-[22px]', i === 0 && 'border border-b-0 border-[#a8c6ec] bg-[#e4effb]')}>{tab}</button>
      ))}
      <div className="ml-auto flex h-full shrink-0 items-center gap-[13px]">
        <button aria-label="帮助" className="flex h-[12px] w-[12px] items-center justify-center rounded-full border border-white bg-[#2864c8] text-[10px] font-bold leading-[12px] text-white outline outline-1 outline-[#2864c8]">?</button>
        <button aria-label="最小化窗口" className="mt-[6px] h-[2px] w-[7px] bg-[#667c9c]" />
        <button aria-label="还原窗口"><svg className="block h-[9px] w-[10px]" viewBox="0 0 10 9"><path d="M2.500 3V1h7v4H8M.5 3.500h7v4h-7Z" fill="none" stroke="#667c9c" /><path d="M0 3.500h8M2 1h8" stroke="#667c9c" strokeWidth="2" /></svg></button>
        <button aria-label="关闭窗口" className="-mr-1"><svg className="block h-[8px] w-[8px]" viewBox="0 0 8 8"><path d="M0 0l8 8M8 0L0 8" stroke="#667c9c" strokeWidth="2" /></svg></button>
      </div>
    </div>
  );
}

function MessageBar() {
  return (
    <div className="flex shrink-0 items-center bg-[#c0d8f8] pb-[5px] pl-[2px] pt-[5px] text-[12px] text-[#15428b]">
      <div className="flex h-[33px] flex-1 items-center border border-[#9bbbe3] bg-[linear-gradient(#fff,#e0f1ff)]">
        <svg className="ml-[2px] h-[16px] w-[15px]" viewBox="0 0 15 16"><path d="M7.500 1C5 3 3 3 1 3c0 6 1 10 6.500 12.500C13 13 14 9 14 3c-2 0-4 0-6.500-2Z" fill="#f28a1c" stroke="#7a7a80" /><path d="M7.500 2C6 3.500 4 4 2 4c0 4 1 5 1 5l4.500-2Z" fill="#ffd070" /></svg>
        <b className="ml-[11px]">安全警告</b>
        <span className="ml-[12px]">部分活动内容已被禁用。</span>
        <button className="ml-[10px] h-[22px] w-[70px] border border-[#a3bfe4] bg-white leading-[18px]">选项...</button>
      </div>
      <button aria-label="关闭此消息" className="-mr-[3px] ml-2"><svg className="h-[8px] w-[5px]" viewBox="0 0 5 8"><path d="M0 0l4 4L0 8" fill="none" stroke="#55677f" strokeWidth="2" /></svg></button>
    </div>
  );
}

function FormulaBar() {
  return (
    <div className="flex h-[21px] shrink-0 items-stretch border-y border-[#6f94c4] bg-white text-black">
      <input aria-label="名称框" defaultValue="C10" className="w-[140px] bg-transparent text-center font-['Liberation_Mono',monospace] text-[13px] outline-none" />
      <button aria-label="名称列表" className="w-[20px] pl-[2px]"><svg className="mx-auto h-[4px] w-[7px]" viewBox="0 0 8 5"><path d="M0 0h8L4 5Z" fill="#000" /></svg></button>
      <div className="flex w-[77px] items-center rounded-l-full border-l border-r border-[#8ba9d0] bg-[linear-gradient(#e6effb,#a9c3e8)]">
        <span className="ml-1 h-[12px] w-[10px] rounded-full bg-[radial-gradient(#fff,#b7cbe6)]" />
        <button aria-label="插入函数" className="ml-auto mr-[5px] font-['Liberation_Serif',serif] text-[14px] font-bold italic leading-[16px] text-[#444]">f<span className="text-[11px]">x</span></button>
      </div>
      <input aria-label="编辑栏" defaultValue="板边的铜皮和焊盘按允许漏铜制作" className="min-w-0 flex-1 bg-transparent pl-[12px] text-[15px] leading-[18px] outline-none" />
      <button aria-label="展开编辑栏" className="w-[5px] border-l border-[#6f94c4] bg-[#d5e4f7]"><svg className="mx-auto h-[6px] w-[2px]" viewBox="0 0 2 6"><path d="M0 0h2v2H0ZM0 4h2v2H0Z" /></svg></button>
    </div>
  );
}

const columns = [
  { name: 'A', width: 'w-[58px]' }, { name: 'B', width: 'w-[36px]' }, { name: 'C', width: 'w-[166px]' },
  { name: 'D', width: 'w-[32px]' }, { name: 'E', width: 'w-[81px]' }, { name: 'F', width: 'w-[54px]' },
  { name: 'G', width: 'w-[48px]' }, { name: 'H', width: 'w-[89px]' }, { name: 'I', width: 'w-[139px]' }, { name: '', width: 'w-[87px]' },
];

const notes = [
  { text: '过孔按非导电树脂塞孔并电镀填平制作' }, { text: '底层整板不印绿油制作', mark: true }, { text: '板边的铜皮和焊盘按允许漏铜制作' },
  { text: '阻抗已确认', mark: true }, { text: '外层完成铜厚最小10Z' }, { text: '' }, { text: '' }, { text: '' }, { text: '' }, { text: '' },
];

const cell = 'border-b border-r border-black p-0';

function RowHead({ n }: { n: number }) {
  return <th className="border-b border-r border-[#9eb6ce] bg-[#e4ecf7] p-0 align-bottom font-['Liberation_Serif',serif] text-[16px] font-normal leading-[16px] text-[#39465c]">{n}</th>;
}

function Sheet() {
  return (
    <div className="relative min-h-0 flex-1 overflow-hidden bg-white">
      <table className="w-[825px] table-fixed border-separate border-spacing-0 text-center text-[17px] font-bold leading-[19px] text-black">
        <colgroup>
          <col className="w-[35px]" />
          {columns.map((c, i) => <col key={i} className={c.width} />)}
        </colgroup>
        <thead>
          <tr className="h-[19px]">
            <th className="border-b border-r border-[#9eb6ce] bg-[#a9c4e9] p-0"><svg className="ml-auto mr-[2px] h-[13px] w-[12px]" viewBox="0 0 12 13"><path d="M12 0v13H0Z" fill="#e8f0fa" /></svg></th>
            {columns.map((c, i) => <th key={i} className="border-b border-r border-[#9eb6ce] bg-[linear-gradient(#f6f9fc,#d5dce6)] p-0 font-['Liberation_Serif',serif] text-[14px] font-normal leading-[17px] text-[#27384f]">{c.name}</th>)}
          </tr>
        </thead>
        <tbody>
          <tr className="h-[30px]"><RowHead n={1} /><td colSpan={10} className="border-b border-black p-0 text-[24px] leading-[28px]">预审指示</td></tr>
          <tr className="h-[40px]">
            <RowHead n={2} />
            <td className={cell}>产品<br />编号</td>
            <td colSpan={3} className={clsx(cell, "pt-[2px] font-['Liberation_Mono',monospace] text-[15px]")}>3SA3V00HA0</td>
            <td className={cell}>预审日期</td>
            <td colSpan={2} className={clsx(cell, "pt-[2px] font-['Liberation_Mono',monospace] text-[15px]")}>2020/5/14</td>
            <td className={cell}>预审人</td>
            <td className={cell}>唐超</td>
            <td className={clsx(cell, 'pl-[6px] text-left')}>附件</td>
          </tr>
          <tr className="h-[30px]">
            <RowHead n={3} />
            <td rowSpan={4} className={clsx(cell, 'text-[#0000c8]')}>待确认光绘时一起确认问题</td>
            <td className={clsx(cell, 'whitespace-nowrap text-[16px] font-normal')}>序号</td>
            <td colSpan={5} className={clsx(cell, 'text-[#0000c8]')}>待与客户确认问题(原因与内容)</td>
            <td colSpan={2} className={clsx(cell, 'text-[#0000c8]')}>预审建议</td>
            <td className={cell} />
          </tr>
          {[1, 2, 3].map(n => (
            <tr key={n} className="h-[34px]">
              <RowHead n={n + 3} />
              <td className={clsx(cell, "pt-[2px] font-['Liberation_Serif',serif] font-normal")}>{n}</td>
              <td colSpan={5} className={cell} /><td colSpan={2} className={cell} /><td className={cell} />
            </tr>
          ))}
          <tr className="h-[45px]">
            <RowHead n={7} />
            <td colSpan={2} className={cell}>工艺流程<br />指示</td>
            <td colSpan={7} className={cell} /><td className={cell} />
          </tr>
          {notes.map((note, i) => (
            <tr key={i} className="h-[40px]">
              <RowHead n={i + 8} />
              {i === 0 && <td rowSpan={10} className={cell}><span className="font-['Liberation_Mono',monospace] text-[15px]">CAM</span><br />指示</td>}
              <td className={clsx(cell, "pt-[2px] font-['Liberation_Serif',serif]")}>{i + 1}</td>
              <td colSpan={7} className={clsx(cell, "pl-[3px] text-left font-['Liberation_Serif','Noto_Sans_CJK_SC',serif] text-[14px]", note.mark && 'bg-[#ffff00]')}>{note.text}</td>
              <td className={cell} />
            </tr>
          ))}
        </tbody>
      </table>
      <div className="pointer-events-none absolute left-[65px] top-[345px] h-[37px] w-[328px] border-2 border-[#dc1414] shadow-[2px_2px_4px_rgba(0,0,0,.5),inset_2px_2px_4px_rgba(0,0,0,.4)]" />
    </div>
  );
}

const sheetTabs = ['图1(fig1)', '图2(fig2)', '图3(fig3)', '图4(fig4)', '图5(fig5)'];

function SheetTabs() {
  return (
    <div className="flex h-[17px] shrink-0 overflow-hidden border-b border-[#8fb0dc] bg-[#bcd3f3] text-[#1f4a94]">
      <div className="flex w-[63px] shrink-0 items-center justify-around border-r border-[#8fb0dc] bg-[#dce9fb]">
        {['M1 0v8M8 0L3 4L8 8Z', 'M7 0L2 4L7 8Z', 'M2 0L7 4L2 8Z', 'M8 0v8M1 0L6 4L1 8Z'].map((d, i) => (
          <button key={d} aria-label={['第一张', '上一张', '下一张', '最后一张'][i]}><svg className="block h-[6px] w-[7px]" viewBox="0 0 9 8"><path d={d} fill="#1f4a94" stroke="#1f4a94" /></svg></button>
        ))}
      </div>
      <div className="flex w-[401px] shrink-0 overflow-hidden">
        <button className="w-[42px] shrink-0 bg-white pl-[2px] text-[14px] leading-[16px]">指示</button>
        {sheetTabs.map(tab => (
          <button key={tab} className="flex w-[79px] shrink-0 items-center whitespace-nowrap bg-[linear-gradient(#dce9fb,#b4cef2)] font-['Liberation_Mono','Noto_Sans_CJK_SC',monospace] text-[12px] leading-[16px]">
            <svg className="h-4 w-[12px] shrink-0" viewBox="0 0 12 16"><path d="M0 16L11 0" stroke="#7f9fcf" /></svg>{tab}
          </button>
        ))}
      </div>
      <div className="flex min-w-0 flex-1 items-center bg-[#7898c2]">
        <span className="h-[14px] w-[6px] border border-[#5d82b5] bg-white" />
        <svg className="ml-2 h-[9px] w-[5px]" viewBox="0 0 5 9"><path d="M5 0v9L0 4.500Z" fill="#304f7c" /></svg>
        <span className="ml-[6px] flex h-[15px] w-[26px] items-center justify-center rounded-[2px] border border-[#8b9bb0] bg-[linear-gradient(#fff,#cfd6df)]"><svg className="h-[6px] w-[8px]" viewBox="0 0 8 6"><path d="M.5 0v6M2.500 0v6M4.500 0v6M6.500 0v6" stroke="#777" /></svg></span>
        <svg className="ml-auto mr-[8px] h-[9px] w-[5px]" viewBox="0 0 5 9"><path d="M0 0v9L5 4.500Z" fill="#304f7c" /></svg>
        <span className="mr-[5px] h-[14px] w-[6px] border border-[#5d82b5] bg-white" />
      </div>
    </div>
  );
}

function StatusBar() {
  return (
    <footer className="flex h-[20px] shrink-0 items-center overflow-hidden whitespace-nowrap bg-[linear-gradient(#dbe8fa,#bdd3f3_40%,#a9c6ee)] pl-[7px] font-['Noto_Sans','Noto_Sans_CJK_SC',sans-serif] text-[12px] text-[#1d3c6e]">
      <span className="border-r border-[#8fb0dc] pr-[9px]">就绪</span>
      <div className="ml-auto flex gap-[16px]"><span>平均值: 2317.947368</span><span>计数: 38</span><span>求和: 44041</span></div>
      <div className="ml-[16px] flex h-full w-[57px] border border-[#7f9fcf] pt-1">
        <button aria-label="普通" className="flex-1 bg-[#f8cf88]"><svg className="mx-auto h-[12px] w-[13px]" viewBox="0 0 13 12"><path d="M.5.5h12v11H.5ZM.5 4.500h12M.5 8.500h12M4.500 0v12M8.500 0v12" fill="#fff" stroke="#666" /></svg></button>
        <button aria-label="页面布局" className="flex-1"><svg className="mx-auto h-[12px] w-[11px]" viewBox="0 0 11 12"><path d="M.5.5h10v11H.5ZM3.500 3.500h4v6h-4Z" fill="#fff" stroke="#555" /></svg></button>
        <button aria-label="分页预览" className="flex-1"><svg className="mx-auto h-[12px] w-[12px]" viewBox="0 0 12 12"><path d="M.5.5h11v11H.5ZM4.500 0v7h3V0" fill="#fff" stroke="#555" /></svg></button>
      </div>
      <span className="ml-[8px] w-[40px]">100%</span>
      <button aria-label="缩小" className="flex h-[15px] w-[15px] items-center justify-center rounded-full border border-[#4a6ea8] bg-white leading-[12px]">−</button>
      <input type="range" aria-label="显示比例" className="h-[2px] w-[105px] appearance-none bg-[#5d82b5] [&::-webkit-slider-thumb]:h-[12px] [&::-webkit-slider-thumb]:w-[9px] [&::-webkit-slider-thumb]:appearance-none [&::-webkit-slider-thumb]:rounded-b-[4px] [&::-webkit-slider-thumb]:border [&::-webkit-slider-thumb]:border-[#4a6ea8] [&::-webkit-slider-thumb]:bg-white" />
      <button aria-label="放大" className="mr-[10px] flex h-[15px] w-[15px] items-center justify-center rounded-full border border-[#4a6ea8] bg-white leading-[12px]">+</button>
    </footer>
  );
}

function ExcelWindow() {
  return (
    <section className="absolute -bottom-[6px] left-[966px] right-0 top-[28px] flex flex-col rounded-tl-[7px] bg-black font-['Noto_Sans_CJK_SC',sans-serif] shadow-[0_0_6px_2px_rgba(0,0,0,.45)] outline outline-1 outline-[#3d5054]">
      <TitleBar />
      <div className="ml-[3px] flex min-h-0 flex-1 flex-col border-l border-[#777] pl-[3px]">
        <RibbonTabs />
        <Ribbon />
        <MessageBar />
        <FormulaBar />
        <div className="h-1 shrink-0 bg-[#c0d8f8]" />
        <div className="flex min-h-0 flex-1">
          <Sheet />
          <div className="flex w-[5px] flex-col border-l border-[#5d82b5] bg-[#6f94c8] pt-[26px]"><span className="h-[167px] rounded-l-[2px] border border-[#7488a8] bg-[#e8eef6]" /></div>
        </div>
        <SheetTabs />
        <StatusBar />
      </div>
      <svg className="pointer-events-none absolute bottom-[6px] right-[18px] h-[18px] w-[40px]" viewBox="0 0 40 18">
        <path d="M2 18C4 11 3 4 7 1C11 0 15 4 18 6H23C27 3 32 2 35 4C37 8 36 13 39 18Z" fill="#e52a14" />
        <path d="M6 9L8 3L14 8ZM26 9L33 6L34 12Z" fill="#ffd9cf" />
        <path d="M13 18Q20 9 28 18Z" fill="#fff" />
      </svg>
    </section>
  );
}

export default function App() {
  return (
    <div className="relative flex h-screen w-full flex-col overflow-hidden bg-black">
      <MenuBar />
      <div className="flex min-h-0 flex-1">
        <Sidebar />
        <BoardCanvas />
      </div>
      <Popview />
      <ExcelWindow />
      <button aria-label="Previous image" className="absolute left-[26px] top-[449px] flex h-12 w-12 items-center justify-center rounded bg-white/60">
        <svg className="h-6 w-3" viewBox="0 0 12 24"><path d="M11 2L1 12L11 22" fill="none" stroke="#222" strokeWidth="2" /></svg>
      </button>
    </div>
  );
}
